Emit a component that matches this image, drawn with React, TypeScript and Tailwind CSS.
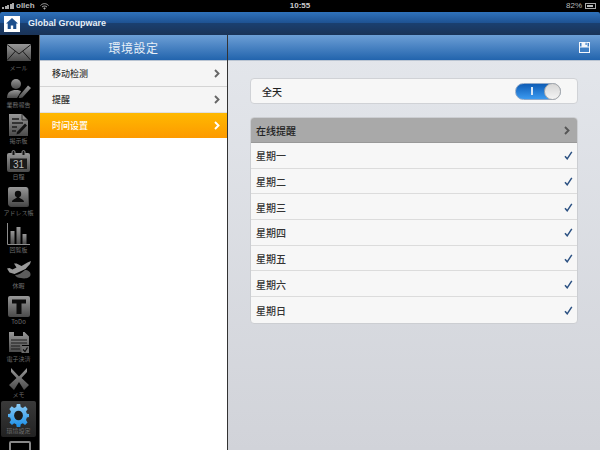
import type { ReactNode } from "react";

const cjk = "font-['Noto_Sans_CJK_SC','Noto_Sans_CJK_JP',sans-serif]";
const G = "url(#iconGray)";

const navItems: { label: string; icon: ReactNode; active?: boolean }[] = [
  {
    label: "メール",
    icon: (
      <svg width="24" height="17" viewBox="0 0 24 17">
        <rect x="0" y="0" width="24" height="17" fill={G} />
        <path d="M0 0.5L12 10L24 0.5M0 16.5L8.5 7M24 16.5L15.5 7" fill="none" stroke="#1c1c1c" strokeWidth="1" />
      </svg>
    ),
  },
  {
    label: "業務報告",
    icon: (
      <svg width="24" height="19" viewBox="0 0 24 19">
        <circle cx="9" cy="5" r="5" fill={G} />
        <path d="M0 19C0 13 4 11 9 11C12 11 13 11.500 14 12.500L10 19Z" fill={G} />
        <path d="M12.500 16.500L21 6.500L24 9L15.500 18.500L11.500 19.500Z" fill={G} />
      </svg>
    ),
  },
  {
    label: "掲示板",
    icon: (
      <svg width="19" height="22" viewBox="0 0 19 22">
        <path d="M0 0H13L19 6V22H0Z" fill={G} />
        <path d="M13 0V6H19" fill="none" stroke="#1c1c1c" strokeWidth="0.8" />
        <path d="M3 5H10M3 9H14M3 13H8M3 17H7" stroke="#1c1c1c" strokeWidth="1.4" />
        <path d="M8 18L16 9.500L18 11.500L10.500 19.500L7.500 20.500Z" fill="#111" />
      </svg>
    ),
  },
  {
    label: "日程",
    icon: (
      <svg width="23" height="22" viewBox="0 0 23 22">
        <rect x="0" y="3" width="23" height="19" rx="2" fill={G} />
        <path d="M5 5V2a1.500 1.500 0 0 1 3 0V5M15 5V2a1.500 1.500 0 0 1 3 0V5" fill="#111" stroke="#8a8a8a" strokeWidth="1" />
        <rect x="3" y="8.500" width="17" height="10.500" fill="#1a1a1a" />
        <text x="11.500" y="17.500" textAnchor="middle" fontSize="10" fontFamily="Liberation Sans" fill="#bbb">31</text>
      </svg>
    ),
  },
  {
    label: "アドレス帳",
    icon: (
      <svg width="21" height="20" viewBox="0 0 21 20">
        <rect x="1" y="1" width="20" height="19" rx="2" fill="#444" />
        <rect x="0" y="0" width="20" height="19" rx="2" fill={G} />
        <circle cx="10" cy="7" r="3.200" fill="#0c0c0c" />
        <path d="M4 15C4 12 8 12 9 10H11C12 12 16 12 16 15Z" fill="#0c0c0c" />
      </svg>
    ),
  },
  {
    label: "回覧板",
    icon: (
      <svg width="23" height="22" viewBox="0 0 23 22">
        <path d="M0.500 0V21.500H23" fill="none" stroke="#8c8c8c" strokeWidth="1" />
        <rect x="3.500" y="8" width="4" height="13" fill={G} />
        <rect x="9.500" y="4" width="4" height="17" fill={G} />
        <rect x="15.500" y="11" width="4" height="10" fill={G} />
      </svg>
    ),
  },
  {
    label: "休暇",
    icon: (
      <svg width="24" height="18" viewBox="0 0 24 18">
        <path d="M8 14C11 14 15 12 18 9C21 9 24 11 23.500 14C23 17 18 18 14 17C11 17 9 16 8 14Z" fill="#5c5c5c" />
        <path d="M0 7.500L2.500 7L5.500 8.500L9.500 6.500L7 2.500L9.500 2.500L14.500 5L20.500 1.500L24 0L23 3L18.500 8L12 11L7.500 13L2.500 11.500Z" fill="#999" />
      </svg>
    ),
  },
  {
    label: "ToDo",
    icon: (
      <svg width="22" height="21" viewBox="0 0 22 21">
        <rect x="0" y="0" width="22" height="21" rx="2" fill={G} />
        <path d="M4 3.500H18V7.500H13.500V18H8.500V7.500H4Z" fill="#0c0c0c" />
      </svg>
    ),
  },
  {
    label: "電子決済",
    icon: (
      <svg width="20" height="21" viewBox="0 0 20 21">
        <path d="M0 0H5V4H14V0H15.500L20 4.500V13H13V20H0Z" fill={G} />
        <path d="M2 8H18M2 11H18M2 14H11M2 17H11" stroke="#1c1c1c" strokeWidth="1.100" />
        <rect x="12.500" y="14" width="7.500" height="7" fill="#6c6c6c" />
        <path d="M14 17.500L16 19.500L18.500 15.500" fill="none" stroke="#0c0c0c" strokeWidth="1.200" />
      </svg>
    ),
  },
  {
    label: "メモ",
    icon: (
      <svg width="20" height="22" viewBox="0 0 20 22">
        <path d="M2 0L10 8.500L18 0V4L12.500 10L20 17L15 22L10 14L5 22L0 17L7.500 10L2 4Z" fill={G} />
      </svg>
    ),
  },
  {
    label: "環境設定",
    active: true,
    icon: (
      <svg width="21" height="23" viewBox="0 0 24 24" preserveAspectRatio="none">
        <path
          d="M10 0H14L14.600 3.200L17 4.200L19.700 2.300L22.500 5.100L20.600 7.800L21.600 10.200L24 10.400V13.600L21.600 14.200L20.600 16.600L22.300 19.200L19.500 22L16.900 20.200L14.600 21.200L14 24H10L9.400 21.200L7 20.200L4.500 22L1.700 19.200L3.400 16.600L2.400 14.200L0 13.600V10.400L2.400 10.200L3.400 7.800L1.500 5.100L4.300 2.300L7 4.200L9.400 3.200Z"
          fill="url(#iconBlue)"
        />
        <circle cx="12" cy="12" r="5" fill="#1a1a1a" />
      </svg>
    ),
  },
];

const days = ["星期一", "星期二", "星期三", "星期四", "星期五", "星期六", "星期日"];

function Chevron({ color }: { color: string }) {
  return (
    <svg width="6" height="9" viewBox="0 0 6 9">
      <path d="M1 1L4.500 4.500L1 8" fill="none" stroke={color} strokeWidth="1.900" />
    </svg>
  );
}

function Check() {
  return (
    <svg width="9" height="9" viewBox="0 0 9 9">
      <path d="M1 5.200L3.200 7.800L7.800 0.800" fill="none" stroke="#2d5283" strokeWidth="1.500" />
    </svg>
  );
}

function StatusBar() {
  return (
    <div className="flex h-3 items-center justify-between bg-black px-0.5 font-['Liberation_Sans',sans-serif] text-[8px] text-[#bbb]">
      <div className="flex w-[200px] items-center gap-[2px]">
        <div className="flex items-end">
          <span className="mr-[0.5px] h-[2px] w-[2px] bg-[#aaa]" />
          <span className="mr-[0.5px] h-[3px] w-[2px] bg-[#aaa]" />
          <span className="mr-[0.5px] h-[4px] w-[2px] bg-[#aaa]" />
          <span className="mr-[0.5px] h-[5px] w-[2px] bg-[#aaa]" />
          <span className="h-[6px] w-[2px] bg-[#aaa]" />
        </div>
        <span className="font-bold">olleh</span>
        <svg className="ml-[3px]" width="9" height="7" viewBox="0 0 9 7">
          <path d="M0.500 2.500C3 0 6 0 8.500 2.500M2 4C3.500 2.700 5.500 2.700 7 4" fill="none" stroke="#aaa" strokeWidth="1" />
          <path d="M3.200 5.200L4.500 4.200L5.800 5.200L4.500 6.700Z" fill="#aaa" />
        </svg>
      </div>
      <span className="font-bold text-[#ccc]">10:55</span>
      <div className="flex w-[200px] items-center justify-end gap-[3px] pr-0.5">
        <span>82%</span>
        <div className="flex h-[6px] w-[11px] border border-[#aaa] p-px">
          <div className="w-[6px] bg-[#bbb]" />
        </div>
      </div>
    </div>
  );
}

function PanelHeader({ children }: { children: ReactNode }) {
  return (
    <div className="flex h-[26px] shrink-0 items-center border-b border-[#b9c4d2] bg-[linear-gradient(#6d9fd6,#2264ad)]">
      {children}
    </div>
  );
}

export default function App() {
  return (
    <div className={`flex h-[450px] w-[600px] flex-col overflow-hidden bg-black ${cjk}`}>
      <StatusBar />
      <div className="flex h-[23px] items-center gap-2 rounded-t-[2px] bg-[linear-gradient(#2f72bb_0%,#1d5090_50%,#1a3f6f_50%,#1a3357_100%)] pl-1">
        <div className="flex h-4 w-4 items-center justify-center bg-white">
          <svg width="12" height="11" viewBox="0 0 12 11">
            <path d="M6 0L12 5.500H10.300V11H7.200V7.500H4.800V11H1.700V5.500H0Z" fill="#1d4f8c" />
          </svg>
        </div>
        <span className="font-['Liberation_Sans',sans-serif] text-[9px] font-bold text-[#e6eef6]">Global Groupware</span>
      </div>

      <div className="flex min-h-0 flex-1">
        <nav className="flex w-10 shrink-0 flex-col overflow-hidden border-r border-[#666] bg-black pt-[3px]">
          <svg className="h-0 w-0 shrink-0">
            <defs>
              <linearGradient id="iconGray" x1="0" y1="0" x2="0" y2="1">
                <stop offset="0" stopColor="#989898" />
                <stop offset="1" stopColor="#4a4a4a" />
              </linearGradient>
              <linearGradient id="iconBlue" x1="0" y1="0" x2="0" y2="1">
                <stop offset="0" stopColor="#8ccbf5" />
                <stop offset="1" stopColor="#1b8fe8" />
              </linearGradient>
            </defs>
          </svg>
          {navItems.map((item) => (
            <div
              key={item.label}
              className={`mx-px flex h-[36.3px] w-[35px] shrink-0 flex-col items-center justify-end rounded-[2px] pb-[2px] ${
                item.active ? "bg-[linear-gradient(#3a3a3a,#222)]" : ""
              }`}
            >
              <div className="flex flex-1 items-center justify-center pt-0.5">{item.icon}</div>
              <span className="whitespace-nowrap text-[6px] leading-[8px] text-[#6c6c6c]">{item.label}</span>
            </div>
          ))}
          <div className="mx-auto mt-[4px] h-6 w-[22px] shrink-0 rounded-[2px] border-2 border-[#888]" />
        </nav>

        <aside className="flex w-[187px] shrink-0 flex-col bg-white">
          <PanelHeader>
            <span className="w-full text-center text-[12px] tracking-[0.5px] text-[#e8f0f8]">環境設定</span>
          </PanelHeader>
          <div className="flex h-[26px] items-center justify-between border-b border-[#d4d4d4] bg-[#f5f5f5] pl-3 pr-[7px] text-[9px] font-medium text-[#333]">
            <span>移动检测</span>
            <Chevron color="#666" />
          </div>
          <div className="flex h-[26px] items-center justify-between border-b border-[#e0e0e0] bg-[#f5f5f5] pl-3 pr-[7px] text-[9px] font-medium text-[#333]">
            <span>提醒</span>
            <Chevron color="#666" />
          </div>
          <div className="flex h-[25px] items-center justify-between bg-[linear-gradient(#ffb900,#fd9a00)] pl-3 pr-[7px] text-[9px] font-medium text-white">
            <span>时间设置</span>
            <Chevron color="#fff" />
          </div>
        </aside>

        <main className="flex min-w-0 flex-1 flex-col border-l border-[#333] bg-[linear-gradient(#e4e7ec,#d1d3d9)]">
          <PanelHeader>
            <svg className="ml-auto mr-[10px]" width="11" height="11" viewBox="0 0 11 11">
              <path d="M0 0H11V11H0Z" fill="#f4f7fb" />
              <path d="M1 5.500H10V10H1Z" fill="#3f7fc4" />
              <path d="M2.500 0H8.500V4H2.500Z" fill="#f4f7fb" />
              <path d="M1 1H2.500V4.500H1ZM8.500 1H10V4.500H8.500Z" fill="#3f7fc4" />
              <path d="M6.500 0.800H7.700V3H6.500Z" fill="#3f7fc4" />
            </svg>
          </PanelHeader>
          <div className="flex flex-col gap-[13px] px-[22px] pt-[17px]">
            <div className="flex h-[26px] items-center justify-between rounded-[4px] border border-[#d0d2d6] bg-[#f7f7f7] pl-[11px] pr-4 text-[10px] font-medium text-[#222]">
              <span>全天</span>
              <div className="relative flex h-[17px] w-[46px] items-center rounded-full border border-[#8fa8c8] bg-[linear-gradient(#0d5cb6,#3c9af0)] pl-[15px]">
                <span className="h-[8px] w-[2px] bg-[#d8e6f6]" />
                <span className="absolute -right-px h-[17px] w-[17px] rounded-full border border-[#aaa] bg-[linear-gradient(#d6d6d6,#f4f4f4)]" />
              </div>
            </div>
            <div className="overflow-hidden rounded-[4px] border border-[#ccced2] bg-[#f7f7f7] text-[10px] font-medium text-[#333]">
              <div className="flex h-[25px] items-center justify-between border-b border-[#999] bg-[#a9a9a9] pl-[5px] pr-[7px] text-[#222]">
                <span>在线提醒</span>
                <Chevron color="#555" />
              </div>
              {days.map((day) => (
                <div
                  key={day}
                  className="flex h-[25.7px] items-center justify-between border-b border-[#dcdcdc] pl-[5px] pr-[4px] pt-px last:border-b-0"
                >
                  <span>{day}</span>
                  <Check />
                </div>
              ))}
            </div>
          </div>
        </main>
      </div>
    </div>
  );
}
